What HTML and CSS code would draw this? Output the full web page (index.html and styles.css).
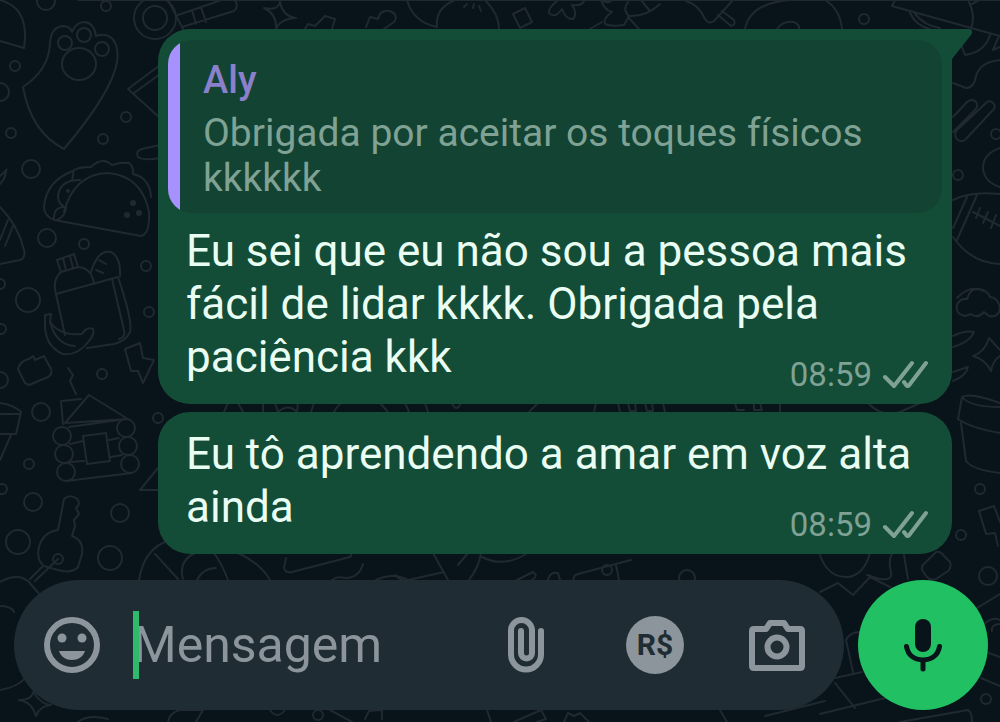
FILE: index.html
```html
<!DOCTYPE html>
<html lang="pt-BR">
<head>
<meta charset="utf-8">
<meta name="viewport" content="width=device-width, initial-scale=1">
<title>Conversa</title>
<link rel="stylesheet" href="styles.css">
</head>
<body>
<div class="chat">
  <svg class="wallpaper" viewBox="0 0 1000 722" preserveAspectRatio="xMinYMin slice" aria-hidden="true">
    <!-- pizza, paw, taco -->
    <path d="M0 0Q30 8 24 48L0 41"/>
    <path d="M23 87Q49 70 50 43Q51 27 63 26Q70 26 72 32Q76 22 85 22Q94 23 96 36Q108 32 114 41Q119 49 117 62Q112 92 64 149Q31 132 23 87Z"/>
    <ellipse cx="79" cy="64" rx="17" ry="16"/><circle cx="65" cy="43" r="7"/><circle cx="84" cy="35" r="7"/><circle cx="102" cy="49" r="7"/>
    <path d="M64 212Q74 174 108 173Q142 176 149 212Q150 234 141 236L54 220Q44 216 44 207Q46 181 73 171Q77 167 91 167Q102 156 112 165Q121 162 129 163Q134 167 133 174Q150 178 151 197M72 180Q74 173 73 171M80 180Q59 180 58 197Q59 204 63 206M54 218Q54 206 66 207Q66 216 57 220"/>
    <g class="dots"><circle cx="133" cy="203" r="3"/><circle cx="139" cy="213" r="3"/><circle cx="127" cy="215" r="3"/><circle cx="68" cy="191" r="2"/></g>
    <path d="M0 176Q9 168 6 170Q6 178 0 184M0 207Q18 225 24 250M0 240L8 220M5 246L13 226M0 264L20 260Q26 258 24 250"/>
    <!-- camera, sparkle, bricks and blobs along the top edge -->
    <circle cx="155" cy="18" r="21"/><circle cx="155" cy="18" r="12"/>
    <path d="M168 0L183 29M178 15L236 -5M182 27L234 11Q239 7 235 0M192 10L196 24M201 7L206 22"/>
    <path d="M264 8Q279 11 280 1Q282 16 296 18Q280 19 276 29Q277 14 264 8Z"/>
    <path d="M305 29L308 24L315 26L325 16L335 19L332 29M366 27L370 17L378 19Q380 9 390 11Q399 15 394 22L384 29M407 0Q413 22 437 27Q435 8 455 0M78 0H1000"/>
    <path d="M485 0Q499 14 499 29M464 7L467 4M473 8L474 4M481 11L479 6M513 14L525 8L532 22L520 28ZM558 0Q546 10 550 14Q556 18 562 9Q566 20 573 19Q578 14 572 5Q584 6 584 0M600 0Q608 4 611 1M601 0Q604 10 612 12Q603 18 605 24Q612 27 624 25L629 16Q622 10 628 2M629 16Q646 17 660 4M641 0L650 11M590 29L602 22M628 17L639 29M686 1Q699 5 705 19Q709 25 714 21L733 0M718 15L731 26Q736 25 734 20L722 11M745 29Q750 3 790 0M825 0Q840 9 842 29M777 29Q783 20 794 22Q800 25 799 29"/>
    <path d="M160 65L128 89L160 118M160 74L134 93M160 145L142 149Q135 151 138 157Q143 161 160 158"/>
    <!-- groceries and banana -->
    <path d="M57 260L74 254L78 267L61 272ZM63 258L66 270M70 256L73 268M61 272Q52 280 56 294L65 335M56 294L118 277Q133 322 130 332Q126 341 114 344L87 348M78 267Q92 268 94 284M91 272Q98 249 111 252Q121 257 120 276M99 260L106 264M96 270L103 273M112 279L124 330Q126 337 119 339"/>
    <path d="M45 315L51 314L50 322Q60 336 82 334Q87 326 93 329Q95 334 89 341Q78 356 63 354Q44 346 45 322ZM50 322Q56 345 75 346"/>
    <path d="M125 349L140 343L143 358L154 360L143 383L138 371H131Z"/>
    <path d="M18 369Q20 361 29 359L33 356L35 360L44 356L51 369Q53 374 48 377L29 385L25 383Z"/>
    <!-- cabin -->
    <path d="M68 368L73 375L70 381L76 394M63 424L61 401L81 399M65 423L89 395L128 419ZM69 427L119 420M70 444L83 441M70 462L84 461M109 440L119 438M111 457L122 455M66 481L132 473M83 436L106 433L110 461L87 464Z"/>
    <circle cx="62" cy="436" r="9"/><circle cx="64" cy="454" r="9"/><circle cx="66" cy="472" r="9"/><circle cx="126" cy="428" r="9"/><circle cx="128" cy="446" r="9"/><circle cx="130" cy="464" r="9"/>
    <path d="M0 403Q14 405 21 412L16 434L0 434M0 414L19 414M11 435L0 460M158 468L140 490H158"/>
    <!-- key and ring -->
    <path d="M58 530L64 499Q69 494 76 498Q82 503 76 508L79 514L74 520L75 526L72 536Q84 540 82 554L78 567Q72 574 58 570L44 566Q36 560 39 547Q43 532 58 530ZM58 559L35 581M42 567L30 579"/><circle cx="58" cy="559" r="5"/>
    <path d="M0 582Q18 572 29 582L40 595M0 690Q18 687 25 678M0 606Q11 606 14 612M19 700Q32 700 33 692Q42 705 51 705Q39 706 36 716Q32 702 19 700M78 722Q88 714 108 719"/>
    <path d="M139 580Q144 548 170 540M155 554L178 579M183 579Q178 561 195 553M197 580Q203 568 216 568M214 553Q222 564 228 580M238 553Q260 563 270 580M286 558L284 568Q285 573 292 572L350 557Q353 554 350 550M332 580Q337 576 345 578Q359 578 363 564M376 580Q393 572 408 580"/>
    <path d="M433 553L448 580M482 557Q503 568 526 554M396 576Q404 583 410 580M395 575L404 581L444 572M458 565L468 553M481 553Q479 567 469 580"/>
    <path d="M517 580L533 572Q539 576 532 580M548 580Q550 571 558 573L560 580M574 580Q572 576 578 574L631 560M616 565L619 580"/>
    <path d="M168 722Q169 713 180 710L203 710L196 722M270 710Q277 720 285 710M330 710L352 722M365 719L369 711L382 710L382 719M487 710L491 722M514 722L541 710L546 719L537 722M564 722L568 713L574 716L580 713L589 722M720 710L727 722M765 716L825 701"/>
    <!-- slivers visible between the bubbles -->
    <path d="M224 412L228 403M238 403L243 412M263 403V412M275 403L278 412Q288 403 297 412L298 403M311 412L314 403M334 412Q337 406 342 403M380 403L388 412M405 403L409 412M425 403L428 412M452 403Q456 413 461 403M529 412L538 403M594 412L596 403M618 403L620 412M628 403L630 411H636L635 403M645 403L647 411H653L652 403M663 403L665 412M735 403L737 410H744M754 403V410H762L760 403M780 403V412M868 403Q882 418 900 412L920 403"/>
    <!-- right edge: melon, football, cloud, pot -->
    <path d="M910 13Q916 26 930 29M895 0L892 6L1000 36M968 0Q976 15 971 29M970 5L985 -3M915 14Q925 26 940 28M960 42L965 55Q985 52 990 35M999 36L993 50L1000 47M953 83L966 88Q974 88 976 76Q980 62 1000 60"/>
    <path d="M953 117L967 102Q972 98 976 102Q979 106 975 110L953 132M957 130L987 102Q991 100 994 104Q996 108 992 111L965 140Q960 143 956 138Q954 134 957 130"/>
    <path d="M1000 148Q983 154 983 168Q984 182 1000 187M1000 194Q970 191 953 200M1000 264Q971 263 953 237M967 197L953 228M977 195L957 240M973 212L1000 226M980 208L976 218M988 212L983 223M996 215L991 228"/>
    <path d="M965 316Q955 314 957 305Q960 298 967 299Q970 288 979 289Q987 290 990 297Q999 298 1000 309Q998 318 989 316L984 312Q978 319 971 314ZM957 298Q970 284 984 291"/>
    <path d="M953 336Q965 330 974 332Q970 342 953 347M953 372L968 367Q966 376 953 381M989 338Q985 352 973 356Q985 359 991 371Q993 360 1000 356M989 338L1000 350"/>
    <path d="M1000 403Q970 392 962 397L958 419Q971 428 1000 433M962 397Q970 407 1000 407M961 423L966 461Q973 470 1000 473M979 511L994 506L1000 522M979 511L986 534L995 533L998 546"/>
    <path d="M922 566L936 552Q941 551 944 556L950 562Q952 567 948 571L936 579Q931 581 927 577L922 570ZM904 555L908 579M820 555Q828 578 848 577Q864 575 870 553M892 554Q888 560 891 572Q893 581 880 579L867 575M820 592L838 583L853 595L870 577L890 587M846 640Q850 632 860 632M846 640L853 672M835 678L862 672M835 683L855 708M820 714L885 698M900 722L968 710Q972 712 972 722M977 608L1000 594M984 624Q993 616 1000 620M992 631Q991 624 1000 624M986 652L1000 657M981 678L1000 686"/>
    <!-- loose circles -->
    <g>
      <circle cx="46" cy="1" r="9"/><circle cx="106" cy="6" r="5"/><circle cx="15" cy="66" r="5"/><circle cx="0" cy="92" r="9"/><circle cx="11" cy="133" r="5"/><circle cx="31" cy="169" r="9"/><circle cx="126" cy="117" r="5"/><circle cx="103" cy="139" r="5"/><circle cx="47" cy="238" r="9"/><circle cx="84" cy="244" r="5"/>
      <circle cx="28" cy="300" r="12"/><circle cx="146" cy="266" r="5"/><circle cx="149" cy="312" r="5"/><circle cx="0" cy="284" r="5"/><circle cx="1" cy="329" r="5"/><circle cx="102" cy="374" r="5"/><circle cx="41" cy="412" r="9"/><circle cx="0" cy="380" r="8"/><circle cx="158" cy="418" r="5"/><circle cx="29" cy="464" r="5"/><circle cx="2" cy="489" r="5"/><circle cx="33" cy="502" r="9"/><circle cx="120" cy="513" r="9"/><circle cx="18" cy="542" r="12"/><circle cx="110" cy="558" r="12"/><circle cx="318" cy="715" r="5"/>
      <circle cx="864" cy="19" r="5"/><circle cx="996" cy="134" r="5"/><circle cx="958" cy="175" r="5"/><circle cx="980" cy="489" r="5"/><circle cx="961" cy="535" r="5"/><circle cx="988" cy="576" r="9"/><circle cx="986" cy="699" r="5"/><circle cx="607" cy="570" r="5"/><circle cx="687" cy="578" r="8"/>
    </g>
  </svg>

  <main class="messages">
    <article class="bubble">
      <svg class="tail" viewBox="0 0 20 32" aria-hidden="true"><path d="M0 0H17Q22 1 19 6L0 30Z"/></svg>
      <blockquote class="quote">
        <cite class="quote-name">Aly</cite>
        <p class="quote-text">Obrigada por aceitar os toques físicos kkkkkk</p>
      </blockquote>
      <div class="text">
        Eu sei que eu não sou a pessoa mais fácil de lidar kkkk. Obrigada pela paciência kkk
        <div class="meta"><time>08:59</time><svg class="checks" viewBox="0 0 46 30" role="img" aria-label="Entregue"><path d="M3 17L12 26L30 3M22 22L25 26Q27 26 28 24L44 3"/></svg></div>
      </div>
    </article>
    <article class="bubble">
      <div class="text">
        Eu tô aprendendo a amar em voz alta ainda
        <div class="meta"><time>08:59</time><svg class="checks" viewBox="0 0 46 30" role="img" aria-label="Entregue"><path d="M3 17L12 26L30 3M22 22L25 26Q27 26 28 24L44 3"/></svg></div>
      </div>
    </article>
  </main>

  <form class="footer">
    <div class="composer">
      <button class="icon-button" type="button" aria-label="Emoji">
        <svg class="icon" viewBox="0 0 56 56"><circle class="line" cx="28" cy="28" r="25"/><circle cx="18" cy="21" r="4.5"/><circle cx="38" cy="21" r="4.5"/><path d="M15 34H41C39 40 34 43 28 43S17 40 15 34Z"/></svg>
      </button>
      <div class="field">
        <span class="caret"></span>
        <input class="input" type="text" placeholder="Mensagem" aria-label="Mensagem">
      </div>
      <div class="actions">
        <button class="icon-button clip" type="button" aria-label="Anexar">
          <svg class="icon" viewBox="0 0 56 56"><path class="line" d="M43 14V37.500A15 15 0 0 1 13 37.500V13.500A10.500 10.500 0 0 1 34 13.500V36A5.500 5.500 0 0 1 23 36V14"/></svg>
        </button>
        <button class="pay" type="button" aria-label="Pagamento R$">R$</button>
        <button class="icon-button" type="button" aria-label="Câmera">
          <svg class="icon" viewBox="0 0 56 56"><path class="line" d="M5 12H17L21 6H35L39 12H51Q53 12 53 14V49Q53 51 51 51H5Q3 51 3 49V14Q3 12 5 12Z"/><circle class="line" cx="28" cy="30" r="9.500"/></svg>
        </button>
      </div>
    </div>
    <button class="mic" type="button" aria-label="Gravar áudio">
      <svg class="mic-icon" viewBox="0 0 40 54"><rect x="12" y="1" width="16" height="33" rx="8"/><path d="M3.500 28.500C5 37 11 42 20 42S35 37 36.500 28.500M20 42V51"/></svg>
    </button>
  </form>
</div>
</body>
</html>
```
FILE: styles.css
```css
* {
  box-sizing: border-box;
}

body {
  margin: 0;
  background: #08131a;
  font-family: Roboto, "Liberation Sans", sans-serif;
}

p {
  margin: 0;
}

button,
input {
  border: 0;
  padding: 0;
  background: none;
  font: inherit;
}

.chat {
  position: relative;
  display: flex;
  flex-direction: column;
  justify-content: space-between;
  gap: 26px;
  min-height: 100vh;
  overflow: hidden;
}

.wallpaper {
  position: absolute;
  inset: 0;
  width: 100%;
  height: 100%;
  fill: none;
  stroke: #202930;
  stroke-width: 2;
  stroke-linecap: round;
  stroke-linejoin: round;
}

.dots {
  fill: #202930;
  stroke: none;
}

.messages {
  position: relative;
  display: flex;
  flex-direction: column;
  gap: 8px;
  padding: 29px 48px 0 158px;
}

.bubble {
  position: relative;
  padding: 11px 10px 6px;
  border-radius: 32px;
  background: #144d37;
}

.bubble:first-child {
  border-top-right-radius: 0;
}

.tail {
  position: absolute;
  top: 0;
  right: -20px;
  width: 20px;
  height: 32px;
  fill: #144d37;
}

.quote {
  margin: 0 0 12px;
  padding: 13px 24px 12px 35px;
  border-radius: 24px;
  background: linear-gradient(to right, #a791ff 12px, #134332 12px);
}

.quote-name {
  display: block;
  margin-bottom: 4px;
  color: #8b80cb;
  font-size: 38px;
  font-style: normal;
  font-weight: 500;
  line-height: 54px;
}

.quote-text {
  color: #7fa294;
  font-size: 39px;
  line-height: 45px;
}

.text {
  display: flow-root;
  padding: 0 14px 0 18px;
  color: #e9fdf3;
  font-size: 44px;
  line-height: 53px;
}

.text:first-child {
  padding-top: 5px;
}

.meta {
  display: flex;
  float: right;
  align-items: center;
  gap: 10px;
  margin-top: 21px;
  color: #7fa294;
  font-size: 33px;
  line-height: 46px;
}

.checks {
  width: 46px;
  height: 30px;
  fill: none;
  stroke: currentColor;
  stroke-width: 4;
  stroke-linecap: round;
  stroke-linejoin: round;
}

.footer {
  position: relative;
  display: flex;
  align-items: center;
  gap: 14px;
  padding: 0 12px 12px 14px;
}

.composer {
  display: flex;
  flex: 1;
  align-items: center;
  min-width: 0;
  height: 130px;
  padding: 0 38px 0 29px;
  border-radius: 65px;
  background: #1f2c34;
}

.icon-button {
  display: flex;
  flex: none;
  align-items: center;
  justify-content: center;
  width: 58px;
  height: 58px;
  color: #8b959b;
}

.clip {
  width: 72px;
}

.icon {
  width: 56px;
  height: 56px;
  fill: currentColor;
}

.line {
  fill: none;
  stroke: currentColor;
  stroke-width: 6;
  stroke-linecap: round;
  stroke-linejoin: round;
}

.field {
  display: flex;
  flex: 1;
  align-items: center;
  min-width: 0;
  padding-left: 32px;
}

.caret {
  z-index: 1;
  flex: none;
  width: 6px;
  height: 68px;
  margin-right: -6px;
  background: #2fb96c;
}

.input {
  flex: 1;
  width: 100%;
  min-width: 0;
  height: 68px;
  color: #e9edef;
  font-size: 50px;
  outline: 0;
}

.input::placeholder {
  color: #8b959b;
  opacity: 1;
}

.actions {
  display: flex;
  flex: none;
  align-items: center;
  gap: 64px;
}

.pay {
  flex: none;
  width: 58px;
  height: 58px;
  border-radius: 50%;
  background: #8b959b;
  color: #1f2c34;
  font-size: 30px;
  font-weight: 700;
  line-height: 58px;
}

.mic {
  display: flex;
  flex: none;
  align-items: center;
  justify-content: center;
  width: 130px;
  height: 130px;
  border-radius: 50%;
  background: #21c063;
}

.mic-icon {
  width: 40px;
  height: 54px;
  fill: #08131a;
}

.mic-icon path {
  fill: none;
  stroke: #08131a;
  stroke-width: 5;
  stroke-linecap: round;
}
```
